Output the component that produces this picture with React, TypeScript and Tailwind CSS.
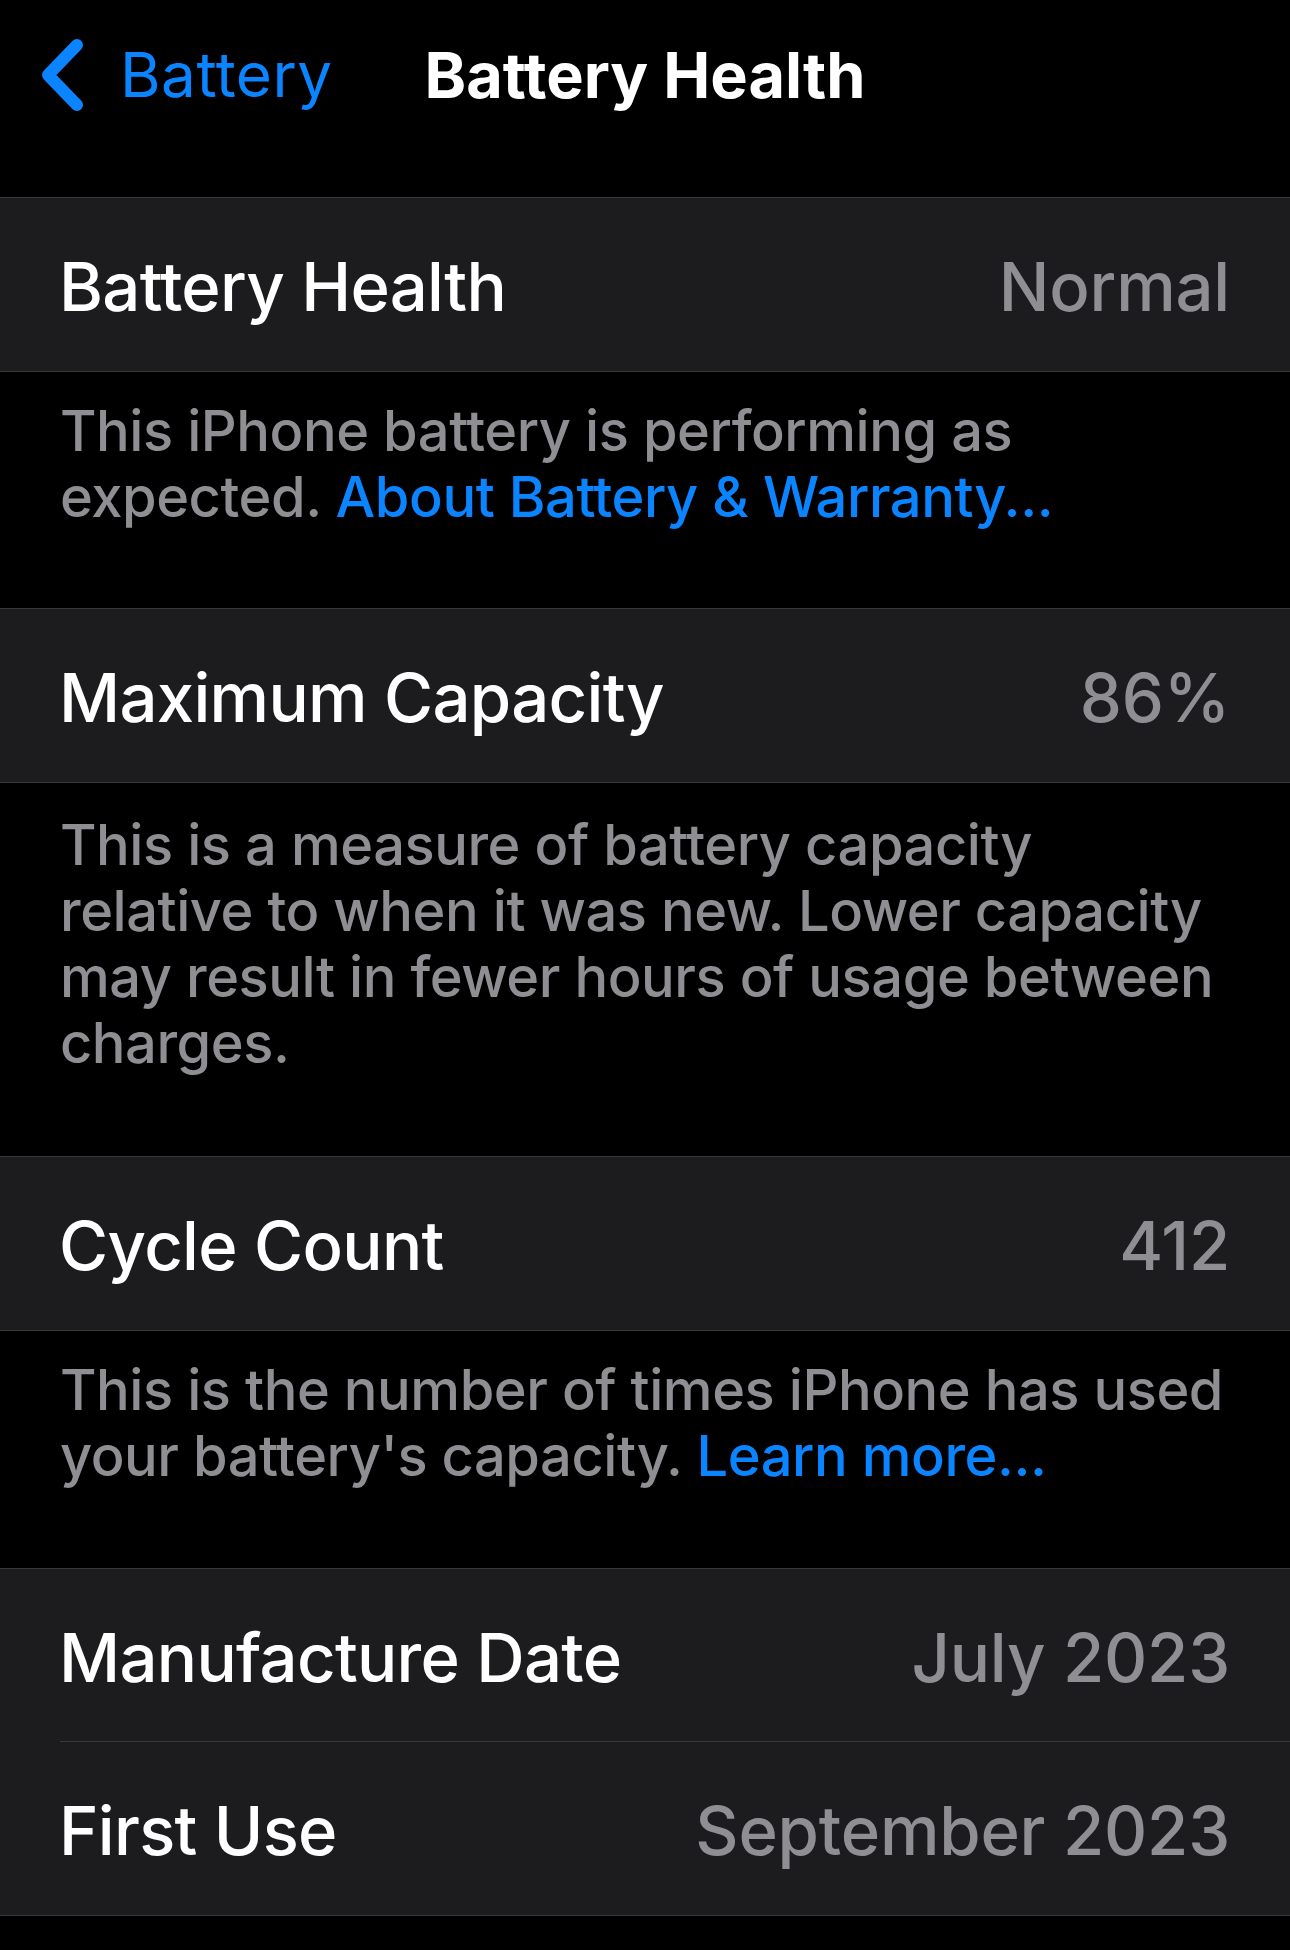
import React from "react";

const FONT = { fontFamily: 'Inter, "Noto Sans", "Liberation Sans", sans-serif' };

function Row({ label, value, inset }: { label: string; value: string; inset?: boolean }) {
  return (
    <div className="relative flex h-[173px] items-center justify-between pl-[59px] pr-[60px] pt-[4px]">
      <span className="text-[67px] leading-[80px] font-medium tracking-[-0.7px] text-white">{label}</span>
      <span className="text-[67px] leading-[80px] font-medium tracking-[-0.2px] text-[#8e8e93]">{value}</span>
      {inset && <div className="absolute bottom-0 left-[60px] right-0 h-px bg-[#38383a]" />}
    </div>
  );
}

function Group({ children }: { children: React.ReactNode }) {
  return <div className="border-y border-[#38383a] bg-[#1c1c1e]">{children}</div>;
}

function Footer({ children, pt, pb }: { children: React.ReactNode; pt: string; pb: string }) {
  return (
    <div className={`pl-[60px] pr-[30px] text-[56px] leading-[66px] font-medium tracking-[-0.45px] text-[#8e8e93] ${pt} ${pb}`}>
      {children}
    </div>
  );
}

export default function App() {
  return (
    <div className="min-h-[1950px] w-[1290px] bg-black" style={FONT}>
      <div className="h-[197px]">
        <div className="grid h-[150px] grid-cols-[1fr_auto_1fr] items-center">
          <div className="flex items-center pl-[42px]">
            <svg width="41" height="72" viewBox="0 0 41 72" className="shrink-0">
              <polyline
                points="35,6 6,36 35,66"
                fill="none"
                stroke="#0a84ff"
                strokeWidth="12"
                strokeLinecap="round"
                strokeLinejoin="round"
              />
            </svg>
            <span className="ml-[37px] text-[62px] leading-[80px] font-normal tracking-[0.5px] text-[#0a84ff]">
              Battery
            </span>
          </div>
          <div className="text-[63px] leading-[80px] font-bold tracking-[0px] text-white">Battery Health</div>
          <div />
        </div>
      </div>

      <Group>
        <Row label="Battery Health" value="Normal" />
      </Group>
      <Footer pt="pt-[26px]" pb="pb-[78px]">
        This iPhone battery is performing as
        <br />
        expected. <span className="text-[#0a84ff]">About Battery &amp; Warranty...</span>
      </Footer>

      <Group>
        <Row label="Maximum Capacity" value="86%" />
      </Group>
      <Footer pt="pt-[29px]" pb="pb-[80px]">
        This is a measure of battery capacity
        <br />
        relative to when it was new. Lower capacity
        <br />
        may result in fewer hours of usage between
        <br />
        charges.
      </Footer>

      <Group>
        <Row label="Cycle Count" value="412" />
      </Group>
      <Footer pt="pt-[26px]" pb="pb-[79px]">
        This is the number of times iPhone has used
        <br />
        your battery's capacity. <span className="text-[#0a84ff]">Learn more...</span>
      </Footer>

      <Group>
        <Row label="Manufacture Date" value="July 2023" inset />
        <Row label="First Use" value="September 2023" />
      </Group>
    </div>
  );
}
